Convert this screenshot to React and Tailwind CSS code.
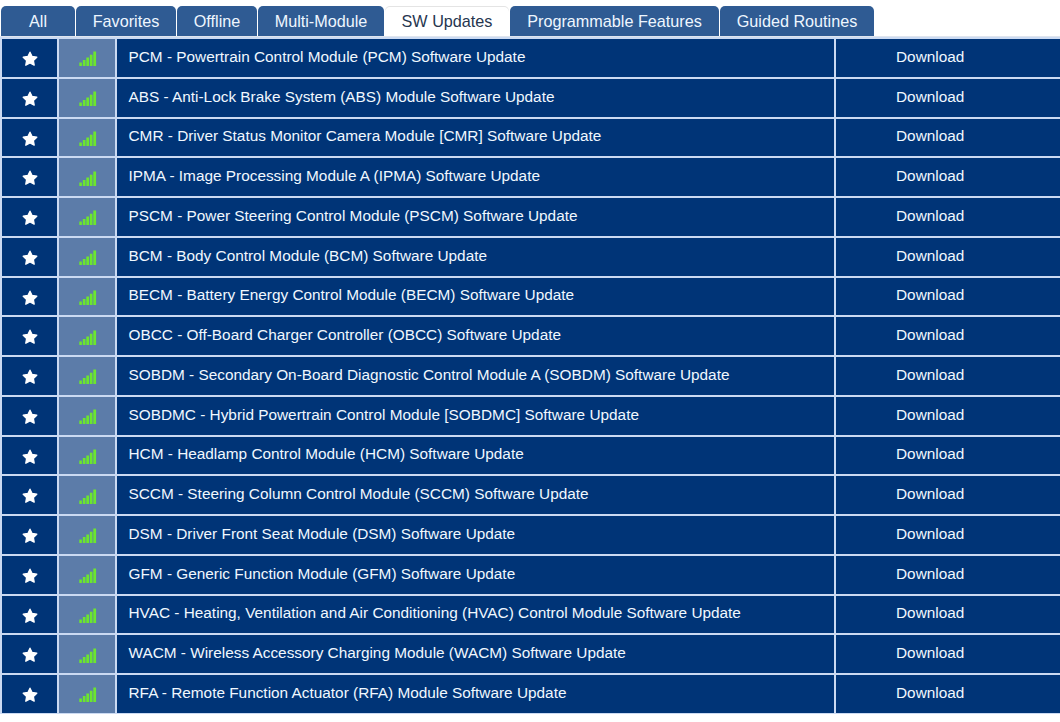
import React, { useState } from "react";

const tabs = [
  { name: "All", width: "w-[74px]" },
  { name: "Favorites", width: "w-[100px]" },
  { name: "Offline", width: "w-[80px]" },
  { name: "Multi-Module", width: "w-[126px]" },
  { name: "SW Updates", width: "w-[124px]" },
  { name: "Programmable Features", width: "w-[209px]" },
  { name: "Guided Routines", width: "w-[154px]" },
];

const updates = [
  "PCM - Powertrain Control Module (PCM) Software Update",
  "ABS - Anti-Lock Brake System (ABS) Module Software Update",
  "CMR - Driver Status Monitor Camera Module [CMR] Software Update",
  "IPMA - Image Processing Module A (IPMA) Software Update",
  "PSCM - Power Steering Control Module (PSCM) Software Update",
  "BCM - Body Control Module (BCM) Software Update",
  "BECM - Battery Energy Control Module (BECM) Software Update",
  "OBCC - Off-Board Charger Controller (OBCC) Software Update",
  "SOBDM - Secondary On-Board Diagnostic Control Module A (SOBDM) Software Update",
  "SOBDMC - Hybrid Powertrain Control Module [SOBDMC] Software Update",
  "HCM - Headlamp Control Module (HCM) Software Update",
  "SCCM - Steering Column Control Module (SCCM) Software Update",
  "DSM - Driver Front Seat Module (DSM) Software Update",
  "GFM - Generic Function Module (GFM) Software Update",
  "HVAC - Heating, Ventilation and Air Conditioning (HVAC) Control Module Software Update",
  "WACM - Wireless Accessory Charging Module (WACM) Software Update",
  "RFA - Remote Function Actuator (RFA) Module Software Update",
];

function StarIcon() {
  return (
    <svg width="16" height="16" viewBox="0 0 16 16" fill="white" stroke="white" strokeWidth="1.3" strokeLinejoin="round">
      <path d="M8 1.2L10.1 5.5L14.8 6.2L11.4 9.5L12.2 14.2L8 12L3.8 14.2L4.6 9.5L1.2 6.2L5.9 5.5Z" />
    </svg>
  );
}

function SignalIcon() {
  return (
    <svg width="18" height="16" viewBox="0 0 18 16" fill="#6ce62e">
      <rect x="0.3" y="11.5" width="2.6" height="3.5" />
      <rect x="3.8" y="9" width="2.7" height="6" />
      <rect x="7.3" y="6.5" width="2.7" height="8.5" />
      <rect x="10.8" y="3.7" width="2.7" height="11.3" />
      <rect x="14.3" y="0.5" width="2.8" height="14.5" />
    </svg>
  );
}

export default function App() {
  const [active, setActive] = useState("SW Updates");

  return (
    <div className="w-[1060px] h-[722px] bg-white overflow-hidden font-['Liberation_Sans',Arial,sans-serif]">
      {/* tabs */}
      <div className="flex h-[37px] pt-[6px] pl-px gap-px border-b border-[#dfe5ee]">
        {tabs.map((tab) => (
          <button
            key={tab.name}
            onClick={() => setActive(tab.name)}
            className={`${tab.width} h-[30px] shrink-0 rounded-t-[5px] text-[16.2px] whitespace-nowrap flex justify-center items-center ${
              active === tab.name
                ? "bg-white text-[#26364f] shadow-[inset_0_1px_0_#e4e4e4]"
                : "bg-[#2f5b93] text-[#eef6ff]"
            }`}
          >
            <span>{tab.name}</span>
          </button>
        ))}
      </div>
      {/* table */}
      <div className="flex flex-col gap-[2px] bg-[#cbdaf2] pt-[2px] pb-px pl-[2px]">
        {updates.map((name) => (
          <div key={name} className="flex gap-[2px] h-[37.75px] text-[15.36px] text-[#f0f8ff]">
            <div className="w-[55px] bg-[#003477] flex justify-center items-center pt-[2.5px]">
              <StarIcon />
            </div>
            <div className="w-[56px] bg-[#5c7ca9] flex justify-center items-center pt-[3px] pl-px">
              <SignalIcon />
            </div>
            <div className="w-[717px] bg-[#003477] flex items-center pl-[11.5px] pb-[3px] whitespace-nowrap">
              <span>{name}</span>
            </div>
            <div className="flex-1 bg-[#003477] flex items-center pl-[60px] pb-[3px]">
              <span>Download</span>
            </div>
          </div>
        ))}
      </div>
    </div>
  );
}
